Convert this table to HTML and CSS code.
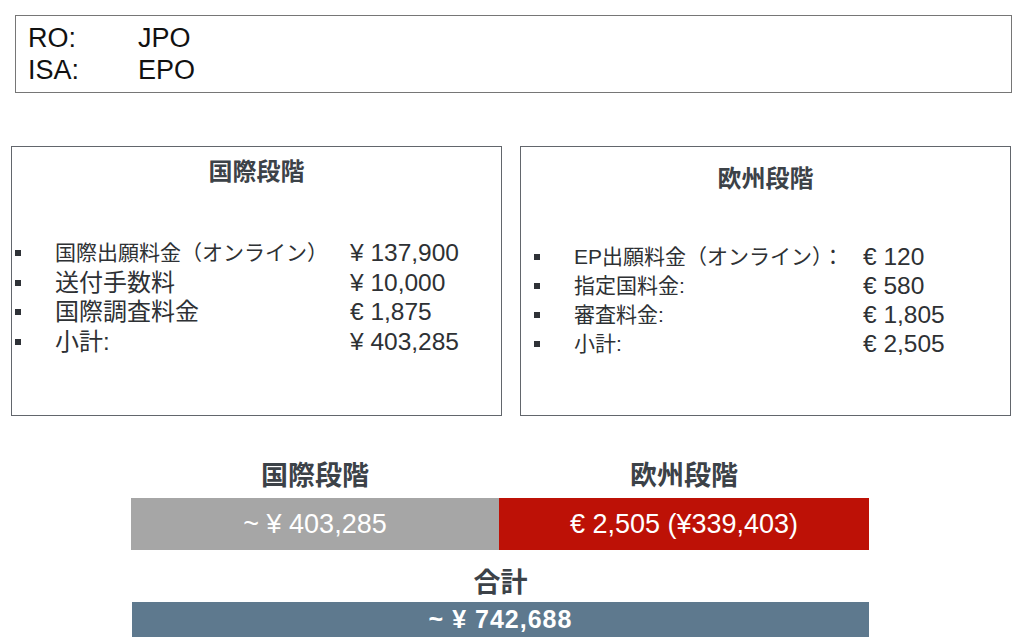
FILE: index.html
```html
<!DOCTYPE html>
<html lang="ja">
<head>
<meta charset="utf-8">
<title>費用</title>
<link rel="stylesheet" href="styles.css">
</head>
<body>
<div class="top">
  <div class="top-row"><span>RO:</span><span>JPO</span></div>
  <div class="top-row"><span>ISA:</span><span>EPO</span></div>
</div>

<div class="panels">
  <section class="panel panel-intl">
    <h2 class="panel-title">国際段階</h2>
    <ul class="fees">
      <li><i class="dot"></i><span class="lbl small">国際出願料金（オンライン）</span><span class="val">¥ 137,900</span></li>
      <li><i class="dot"></i><span class="lbl">送付手数料</span><span class="val">¥ 10,000</span></li>
      <li><i class="dot"></i><span class="lbl">国際調査料金</span><span class="val">€ 1,875</span></li>
      <li><i class="dot"></i><span class="lbl">小計:</span><span class="val">¥ 403,285</span></li>
    </ul>
  </section>
  <section class="panel panel-eu">
    <h2 class="panel-title">欧州段階</h2>
    <ul class="fees">
      <li><i class="dot"></i><span class="lbl">EP出願料金（オンライン）：</span><span class="val">€ 120</span></li>
      <li><i class="dot"></i><span class="lbl">指定国料金:</span><span class="val">€ 580</span></li>
      <li><i class="dot"></i><span class="lbl">審査料金:</span><span class="val">€ 1,805</span></li>
      <li><i class="dot"></i><span class="lbl">小計:</span><span class="val">€ 2,505</span></li>
    </ul>
  </section>
</div>

<div class="summary">
  <div class="sum-grid">
    <div class="sum-head">国際段階</div>
    <div class="sum-head">欧州段階</div>
    <div class="bar bar-gray">~ ¥ 403,285</div>
    <div class="bar bar-red">€ 2,505 (¥339,403)</div>
  </div>
  <div class="sum-head total-head">合計</div>
  <div class="bar-total">~ ¥ 742,688</div>
</div>
</body>
</html>
```

FILE: styles.css
```css
* { box-sizing: border-box; }
html, body { margin: 0; padding: 0; background: #fff; }
body {
  width: 1024px;
  height: 643px;
  overflow: hidden;
  font-family: "Liberation Sans", Arial, "Noto Sans CJK JP", sans-serif;
}

.top {
  margin: 15px 0 0 15px;
  width: 997px;
  height: 78px;
  border: 1px solid #767676;
  padding: 6px 12px;
  font-size: 27px;
  line-height: 32px;
  color: #111;
}
.top-row {
  display: grid;
  grid-template-columns: 110px auto;
}

.panels {
  display: flex;
  gap: 18px;
  margin: 53px 0 0 11px;
}
.panel {
  width: 491px;
  height: 270px;
  border: 1px solid #62666c;
  color: #2e3134;
}
.panel-title {
  margin: 0;
  text-align: center;
  font-size: 24px;
  line-height: 30px;
  font-weight: bold;
  color: #3c4248;
  font-family: "Noto Sans CJK JP", sans-serif;
}
.panel-intl .panel-title { padding-top: 8px; }
.panel-eu .panel-title { padding-top: 15px; }

.fees {
  list-style: none;
  margin: 0;
  padding: 0;
}
.fees li {
  display: grid;
  align-items: center;
}
.panel-intl .fees { margin-top: 53px; padding-left: 3px; }
.panel-intl .fees li {
  grid-template-columns: 40px 295px auto;
  height: 29.7px;
}
.panel-eu .fees { margin-top: 50px; padding-left: 13px; }
.panel-eu .fees li {
  grid-template-columns: 40px 289px auto;
  height: 29px;
}
.dot {
  display: block;
  width: 6px;
  height: 6px;
  background: #2f3237;
}
.lbl {
  font-family: "Liberation Sans", "Noto Sans CJK JP", sans-serif;
  font-size: 24px;
  line-height: 30px;
  white-space: nowrap;
}
.panel-intl .lbl.small { font-size: 21px; }
.panel-eu .lbl { font-size: 21px; }
.val {
  font-size: 24.5px;
  line-height: 30px;
  white-space: nowrap;
}

.summary {
  margin-top: 41px;
}
.sum-grid {
  display: grid;
  grid-template-columns: 368px 370px;
  margin-left: 131px;
}
.sum-head {
  font-family: "Noto Sans CJK JP", sans-serif;
  font-weight: bold;
  font-size: 27px;
  line-height: 34px;
  text-align: center;
  color: #3c4248;
}
.bar {
  margin-top: 7px;
  height: 52px;
  display: flex;
  align-items: center;
  justify-content: center;
  color: #fff;
  font-size: 27px;
}
.bar-gray { background: #a6a6a6; }
.bar-red { background: #bd1106; }

.total-head {
  margin: 14px 0 0 132px;
  width: 737px;
}
.bar-total {
  margin: 4px 0 0 132px;
  width: 737px;
  height: 35px;
  background: #5e798e;
  color: #fff;
  font-weight: bold;
  font-size: 25px;
  letter-spacing: 1px;
  display: flex;
  align-items: center;
  justify-content: center;
}
```
